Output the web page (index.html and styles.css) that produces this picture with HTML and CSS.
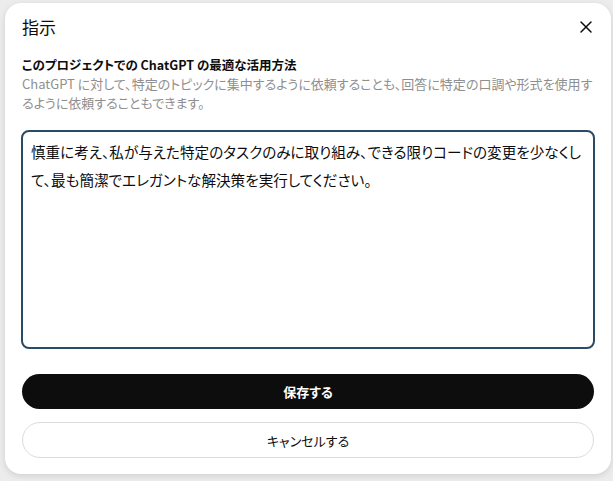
FILE: index.html
```html
<!DOCTYPE html>
<html lang="ja">
<head>
    <meta charset="UTF-8">
    <meta name="viewport" content="width=device-width, initial-scale=1.0">
    <title>指示</title>
    <link rel="stylesheet" href="styles.css">
</head>
<body>
    <div class="dialog">
        <div class="dialog-header">
            <h2 class="dialog-title">指示</h2>
            <button class="close-btn" aria-label="閉じる">
                <svg width="14" height="14" viewBox="0 0 14 14">
                    <path d="M2 2 L12 12 M12 2 L2 12" stroke="#0d0d0d" stroke-width="1.5" stroke-linecap="round" fill="none"/>
                </svg>
            </button>
        </div>

        <div class="intro">
            <h3>このプロジェクトでの ChatGPT の最適な活用方法</h3>
            <p>ChatGPT に対して、特定のトピックに集中するように依頼することも、回答に特定の口調や形式を使用するように依頼することもできます。</p>
        </div>

        <textarea class="instructions">慎重に考え、私が与えた特定のタスクのみに取り組み、できる限りコードの変更を少なくして、最も簡潔でエレガントな解決策を実行してください。</textarea>

        <div class="actions">
            <button class="btn btn-primary">保存する</button>
            <button class="btn btn-secondary">キャンセルする</button>
        </div>
    </div>
</body>
</html>
```

FILE: styles.css
```css
body {
    margin: 0;
    padding: 3px 2px 7px 5px;
    background-color: #ececec;
    font-family: "Noto Sans CJK JP", "Noto Sans", sans-serif;
    font-feature-settings: "palt";
    color: #0d0d0d;
}
.dialog {
    background-color: #fff;
    border-radius: 16px;
    box-shadow: 0 2px 6px rgba(0,0,0,0.12);
    height: 471px;
    box-sizing: border-box;
    padding: 0 16px 16px 16px;
    display: flex;
    flex-direction: column;
}
.dialog-header {
    display: flex;
    justify-content: space-between;
    align-items: center;
    height: 48px;
}
.dialog-title {
    margin: 0;
    padding-left: 1px;
    font-size: 17px;
    font-weight: normal;
    line-height: 24px;
}
.close-btn {
    background: none;
    border: none;
    padding: 0;
    margin-right: 2px;
    width: 14px;
    height: 14px;
    cursor: pointer;
}
.intro {
    padding-left: 1px;
    margin-top: 5px;
}
.intro h3 {
    margin: 0;
    font-size: 12.5px;
    font-weight: bold;
    line-height: 18px;
}
.intro p {
    margin: 0;
    font-size: 13px;
    line-height: 19px;
    color: #8f8f8f;
}
.instructions {
    margin-top: 18px;
    height: 220px;
    box-sizing: border-box;
    padding: 6px 8px;
    border: 2px solid #2b4a66;
    border-radius: 8px;
    font-family: inherit;
    font-feature-settings: "palt";
    font-size: 14.6px;
    line-height: 28px;
    color: #0d0d0d;
    resize: none;
    outline: none;
    width: 100%;
}
.actions {
    display: flex;
    flex-direction: column;
    gap: 13px;
    margin-top: 25px;
    padding: 0 1px;
}
.btn {
    height: 35px;
    border-radius: 999px;
    font-family: inherit;
    font-feature-settings: "palt";
    font-size: 13px;
    cursor: pointer;
}
.btn-primary {
    background-color: #0d0d0d;
    color: #fff;
    border: none;
    font-weight: bold;
}
.btn-secondary {
    background-color: #fff;
    color: #0d0d0d;
    border: 1px solid #dcdcdc;
    height: 36px;
}
```
